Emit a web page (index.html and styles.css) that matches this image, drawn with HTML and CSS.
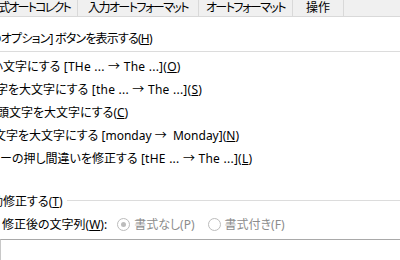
FILE: index.html
```html
<!DOCTYPE html>
<html lang="ja">
<head>
<meta charset="utf-8">
<link rel="stylesheet" href="styles.css">
</head>
<body>
<div class="dialog">
  <div class="tabs">
    <div class="tab tab-first"><span class="cut-tab">書式オートコレクト</span></div>
    <div class="tab tab-input">入力オートフォーマット</div>
    <div class="tab tab-auto">オートフォーマット</div>
    <div class="tab tab-op">操作</div>
    <div class="tab-rest"></div>
  </div>
  <div class="content">
    <div class="row row-top"><span class="c12">の</span>オプション] ボタンを表示する(<u>H</u>)</div>
    <div class="sep"></div>
    <div class="items">
      <div class="row"><span class="c9">小</span>文字にする<span class="lat"> [THe ... → The ...](<u>O</u>)</span></div>
      <div class="row"><span class="c2">字</span>を大文字にする<span class="lat"> [the ... → The ...](<u>S</u>)</span></div>
      <div class="row"><span class="c1">頭</span>文字を大文字にする(<u>C</u>)</div>
      <div class="row"><span class="c4">文</span>字を大文字にする [monday →&nbsp; Monday](<u>N</u>)</div>
      <div class="row">ーの押し間違いを修正する<span class="lat"> [tHE ... → The ...](<u>L</u>)</span></div>
    </div>
    <div class="group">
      <span class="group-label"><span class="c9">動</span>修正する(<u>T</u>)</span>
      <span class="group-line"></span>
    </div>
    <div class="row row-replace">
      <span class="label">修正後の文字列(<u>W</u>):</span>
      <span class="radio checked"></span><span class="dis">書式なし(P)</span>
      <span class="radio"></span><span class="dis">書式付き(F)</span>
    </div>
    <div class="textbox"></div>
  </div>
</div>
</body>
</html>
```
FILE: styles.css
```css
html, body {
  margin: 0;
  padding: 0;
  background: #ffffff;
}
.dialog {
  width: 400px;
  height: 260px;
  overflow: hidden;
  font-family: "Noto Sans", "Noto Sans CJK JP", sans-serif;
  font-size: 12px;
  color: #000;
  font-feature-settings: "palt";
}
.tabs {
  display: flex;
  height: 16px;
  background: #f0f0f0;
  border-bottom: 1px solid #d9d9d9;
}
.tab {
  height: 16px;
  line-height: 16px;
  border-right: 1px solid #d9d9d9;
  white-space: nowrap;
  overflow: hidden;
  box-sizing: border-box;
  text-align: center;
  letter-spacing: -1.5px;
}
.tab-first { width: 78px; text-align: left; }
.cut-tab { display: inline-block; margin-left: -12px; letter-spacing: -1.8px; }
.tab-input { width: 121px; }
.tab-auto { width: 94px; }
.tab-op { width: 51px; letter-spacing: 0; }
.tab-rest { flex: 1; }
.content {
  padding-top: 10px;
}
.row {
  height: 23px;
  line-height: 23px;
  white-space: nowrap;
  padding-left: 2px;
}
.row-top { letter-spacing: -0.8px; }
.lat { letter-spacing: 0.25px; }
.c12 { margin-left: -12px; }
.c9 { margin-left: -11px; }
.c4 { margin-left: -6px; }
.c2 { margin-left: -4px; }
.c1 { margin-left: -3px; }
.sep {
  height: 1px;
  background: #dcdcdc;
  margin-top: 1px;
}
.items {
  margin-top: 3px;
}
.items .row { padding-left: 0; }
.items .row:nth-child(1) { padding-left: 2px; }
.group {
  display: flex;
  align-items: center;
  height: 16px;
  margin-top: 24px;
}
.group-label {
  line-height: 16px;
  white-space: nowrap;
  padding-left: 2px;
  padding-right: 4px;
}
.group-line {
  flex: 1;
  height: 1px;
  background: #dcdcdc;
  margin-top: -3px;
}
.row-replace {
  display: flex;
  align-items: center;
  margin-top: 3px;
}
.label { margin-right: 10px; }
.radio {
  width: 11px;
  height: 11px;
  border: 1px solid #bcbcbc;
  border-radius: 50%;
  box-sizing: content-box;
  margin-right: 4px;
  position: relative;
}
.radio.checked::after {
  content: "";
  position: absolute;
  left: 3px;
  top: 3px;
  width: 5px;
  height: 5px;
  border-radius: 50%;
  background: #bcbcbc;
}
.dis {
  color: #8c8c8c;
  margin-right: 13px;
}
.textbox {
  margin-top: 3px;
  height: 40px;
  margin-left: 0;
  margin-right: -2px;
  border: 1px solid #a9a9a9;
  border-left-color: #c8c8c8;
}
```
